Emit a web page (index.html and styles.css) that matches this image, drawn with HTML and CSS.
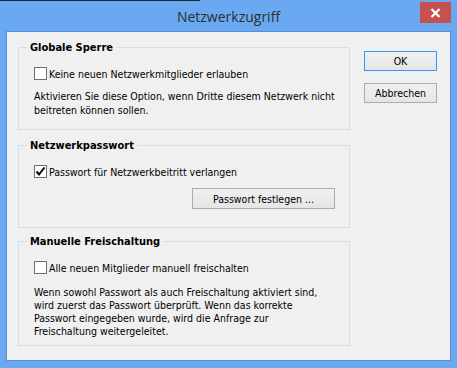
FILE: index.html
```html
<!DOCTYPE html>
<html>
<head>
    <meta charset="utf-8">
    <link rel="stylesheet" href="styles.css">
</head>
<body>
    <div class="window">
        <div class="top-edge"><span class="top-edge-dark"></span></div>
        <div class="title-bar">
            <span></span>
            <div class="title">Netzwerkzugriff</div>
            <div class="close-btn">
                <svg width="11" height="10" viewBox="0 0 11 10">
                    <path d="M1.5 1 L9.5 9 M9.5 1 L1.5 9" stroke="#fff" stroke-width="2.2" fill="none"/>
                </svg>
            </div>
        </div>

        <div class="client">
            <div class="groups">

                <fieldset class="group group-lock">
                    <legend>Globale Sperre</legend>
                    <label class="check-row">
                        <span class="checkbox"></span>
                        <span>Keine neuen Netzwerkmitglieder erlauben</span>
                    </label>
                    <p class="hint hint-lock">Aktivieren Sie diese Option, wenn Dritte diesem Netzwerk nicht<br>beitreten können sollen.</p>
                </fieldset>

                <fieldset class="group group-password">
                    <legend>Netzwerkpasswort</legend>
                    <label class="check-row">
                        <span class="checkbox">
                            <svg width="11" height="11" viewBox="0 0 11 11">
                                <path d="M1.5 5.5 L4 8.5 L9.5 1.5" stroke="#000" stroke-width="2" fill="none"/>
                            </svg>
                        </span>
                        <span>Passwort für Netzwerkbeitritt verlangen</span>
                    </label>
                    <div class="button-row">
                        <button class="btn btn-wide">Passwort festlegen ...</button>
                    </div>
                </fieldset>

                <fieldset class="group group-manual">
                    <legend>Manuelle Freischaltung</legend>
                    <label class="check-row">
                        <span class="checkbox"></span>
                        <span>Alle neuen Mitglieder manuell freischalten</span>
                    </label>
                    <p class="hint hint-manual">Wenn sowohl Passwort als auch Freischaltung aktiviert sind,<br>wird zuerst das Passwort überprüft. Wenn das korrekte<br>Passwort eingegeben wurde, wird die Anfrage zur<br>Freischaltung weitergeleitet.</p>
                </fieldset>

            </div>

            <div class="actions">
                <button class="btn btn-default">OK</button>
                <button class="btn">Abbrechen</button>
            </div>
        </div>
    </div>
</body>
</html>
```

FILE: styles.css
```css
body{
    margin: 0;
    background-color: #6aa9f1;
    font-family: 'DejaVu Sans Condensed', 'DejaVu Sans', sans-serif;
    font-size: 10.5px;
    color: #000;
}

.window{
    width: 457px;
    height: 368px;
    background-color: #6aa9f1;
}

.top-edge{
    height: 1px;
}
.top-edge-dark{
    display: block;
    width: 200px;
    height: 1px;
    background-color: #1c2a3a;
}

.title-bar{
    height: 30px;
    display: grid;
    grid-template-columns: 1fr auto 1fr;
    align-items: start;
}
.title{
    font-family: 'Open Sans', sans-serif;
    font-size: 14px;
    color: #2e2e2e;
    line-height: 20px;
    padding-top: 6px;
}
.close-btn{
    justify-self: end;
    width: 31px;
    height: 21px;
    margin-top: 1px;
    margin-right: 6px;
    background-color: #c75050;
    display: flex;
    align-items: center;
    justify-content: center;
}

.client{
    margin: 0 6px;
    height: 328px;
    background-color: #f0f0f0;
    border: 1px solid #5b8fcf;
    display: flex;
    padding-left: 11px;
}

.groups{
    width: 332px;
    padding-top: 9px;
}

.group{
    margin: 0;
    border: 1px solid #dcdcdc;
    padding: 0 14px 0 15px;
}
.group legend{
    font-size: 11px;
    font-weight: bold;
    line-height: 13px;
    padding: 0 3px;
    margin-left: -7px;
}
.group-password{
    margin-top: 9px;
}
.group-manual{
    margin-top: 7px;
}

.check-row{
    display: flex;
    align-items: center;
    height: 13px;
    margin-top: 13px;
    gap: 2px;
}
.checkbox{
    width: 11px;
    height: 11px;
    background-color: #fff;
    border: 1px solid #707070;
    display: flex;
    align-items: center;
    justify-content: center;
}

.hint{
    margin: 0;
}
.hint-lock{
    line-height: 14px;
    margin-top: 9px;
    padding-bottom: 12px;
}
.hint-manual{
    line-height: 13px;
    margin-top: 12px;
    padding-bottom: 7px;
}

.button-row{
    display: flex;
    justify-content: flex-end;
    margin-top: 10px;
    padding-bottom: 18px;
}

.btn{
    font-family: inherit;
    font-size: 10.5px;
    color: #000;
    height: 20px;
    width: 73px;
    padding: 0;
    border: 1px solid #acacac;
    background: linear-gradient(#f0f0f0, #e5e5e5);
}
.btn-wide{
    width: 143px;
    height: 21px;
}
.btn-default{
    border-color: #3399ff;
}

.actions{
    margin-left: 14px;
    padding-top: 19px;
    display: flex;
    flex-direction: column;
    gap: 12px;
}
```
